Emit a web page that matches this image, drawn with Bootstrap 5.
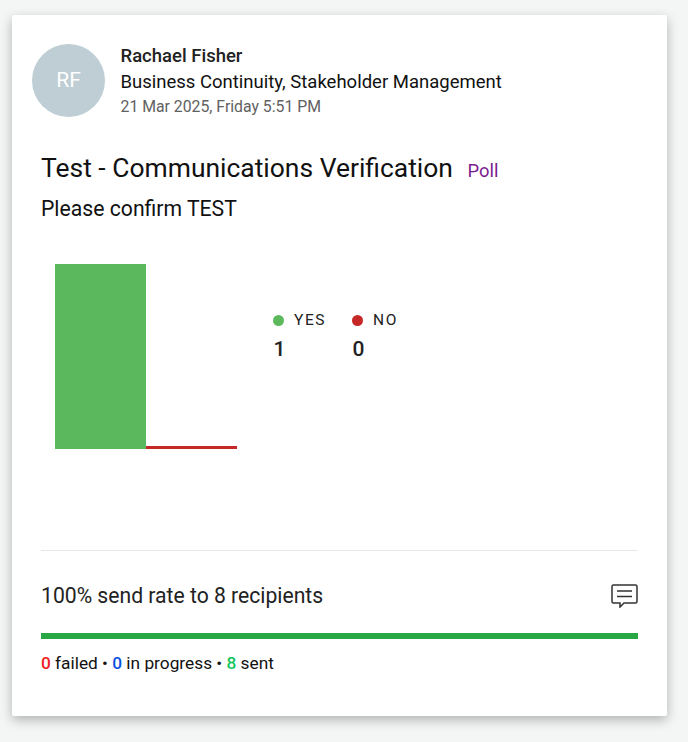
<!DOCTYPE html>
<html lang="en">
<head>
  <meta charset="UTF-8" />
  <meta name="viewport" content="width=device-width, initial-scale=1.0" />
  <title>Poll result</title>
  <link href="https://cdn.jsdelivr.net/npm/bootstrap@5.3.0/dist/css/bootstrap.min.css" rel="stylesheet"/>
  <style>
    html, body { height: 100%; }
    body { background: #f4f6f6; font-family: Roboto, "Liberation Sans", sans-serif; color: #111; overflow: hidden; }
    .page-wrap { padding: 15px 21px 0 12px; }
    .poll-card { height: 701px; border: 0; border-radius: 2px; box-shadow: 0 4px 12px rgba(0,0,0,.28); padding: 29px 29px 0 20px; }
    .avatar { width: 73px; height: 73px; background: #bfced5; color: #fff; font-size: 21px; flex: none; }
    .head-text { margin-left: 15.5px; margin-top: 1px; }
    .author { font-size: 18.5px; font-weight: 500; line-height: 23px; color: #222; }
    .groups { font-size: 18.5px; line-height: 28px; color: #111; }
    .stamp { font-size: 15.8px; line-height: 21px; color: #616161; }
    .poll-body { padding-left: 9px; }
    .poll-title { font-size: 26.45px; font-weight: 400; line-height: 34px; margin: 34px 0 0; color: #111; }
    .poll-tag { font-size: 18.4px; color: #7b1c8e; margin-left: 8px; }
    .poll-question { font-size: 21.2px; line-height: 28px; margin-top: 7px; color: #111; }
    .chart-row { margin-top: 41px; height: 185px; }
    .bars { width: 182px; margin-left: 13.5px; flex: none; }
    .bar-yes { width: 91px; height: 185px; background: #5cb85c; }
    .bar-no { width: 91px; height: 3px; background: #c62828; }
    .legend { margin-left: 36px; margin-top: 46px; gap: 27px; }
    .legend-item { width: 52px; }
    .legend-label { font-size: 15.5px; letter-spacing: 1.6px; line-height: 20px; color: #222; gap: 10.5px; }
    .dot { width: 11px; height: 11px; flex: none; }
    .legend-num { font-size: 21px; font-weight: 500; line-height: 28px; margin-top: 5px; padding-left: 1px; color: #222; }
    .rule { border-top: 1px solid #e6e8e8; margin-top: 101px; }
    .send-line { font-size: 21.15px; line-height: 28px; margin-top: 31px; color: #222; }
    .send-bar { height: 6px; background: #28a745; margin-top: 23px; border-radius: 0; }
    .counts { font-size: 17.3px; line-height: 24px; margin-top: 12px; color: #111; }
    .c-fail { color: #f01c24; font-weight: 500; }
    .c-prog { color: #0d4fe0; font-weight: 500; }
    .c-sent { color: #14c45c; font-weight: 500; }
  </style>
</head>
<body>
  <div class="page-wrap">
    <div class="card poll-card bg-white">
      <div class="d-flex">
        <div class="avatar rounded-circle d-flex align-items-center justify-content-center">RF</div>
        <div class="head-text">
          <div class="author">Rachael Fisher</div>
          <div class="groups">Business Continuity, Stakeholder Management</div>
          <div class="stamp">21 Mar 2025, Friday 5:51 PM</div>
        </div>
      </div>

      <div class="poll-body">
        <h2 class="poll-title">Test - Communications Verification <span class="poll-tag">Poll</span></h2>
        <div class="poll-question">Please confirm TEST</div>

        <div class="chart-row d-flex">
          <div class="bars d-flex align-items-end">
            <div class="bar-yes"></div>
            <div class="bar-no"></div>
          </div>
          <div class="legend d-flex">
            <div class="legend-item">
              <div class="legend-label d-flex align-items-center"><span class="dot rounded-circle" style="background:#5cb85c"></span>YES</div>
              <div class="legend-num">1</div>
            </div>
            <div class="legend-item">
              <div class="legend-label d-flex align-items-center"><span class="dot rounded-circle" style="background:#c62828"></span>NO</div>
              <div class="legend-num">0</div>
            </div>
          </div>
        </div>

        <div class="rule"></div>
        <div class="send-line d-flex justify-content-between align-items-center">
          <span>100% send rate to 8 recipients</span>
          <svg width="27" height="24" viewBox="0 0 27 24" fill="none" stroke="#333" stroke-width="1.5">
            <path d="M2.500 1h22a1.500 1.500 0 0 1 1.500 1.500v15a1.500 1.500 0 0 1-1.500 1.500H13l-4 4v-4H2.500A1.500 1.500 0 0 1 1 17.500v-15A1.500 1.500 0 0 1 2.500 1z"/>
            <path d="M6 7h15M6 12.500h15"/>
          </svg>
        </div>
        <div class="send-bar"></div>
        <div class="counts"><span class="c-fail">0</span> failed • <span class="c-prog">0</span> in progress • <span class="c-sent">8</span> sent</div>
      </div>
    </div>
  </div>
  <script src="https://cdn.jsdelivr.net/npm/bootstrap@5.3.0/dist/js/bootstrap.bundle.min.js"></script>
</body>
</html>
